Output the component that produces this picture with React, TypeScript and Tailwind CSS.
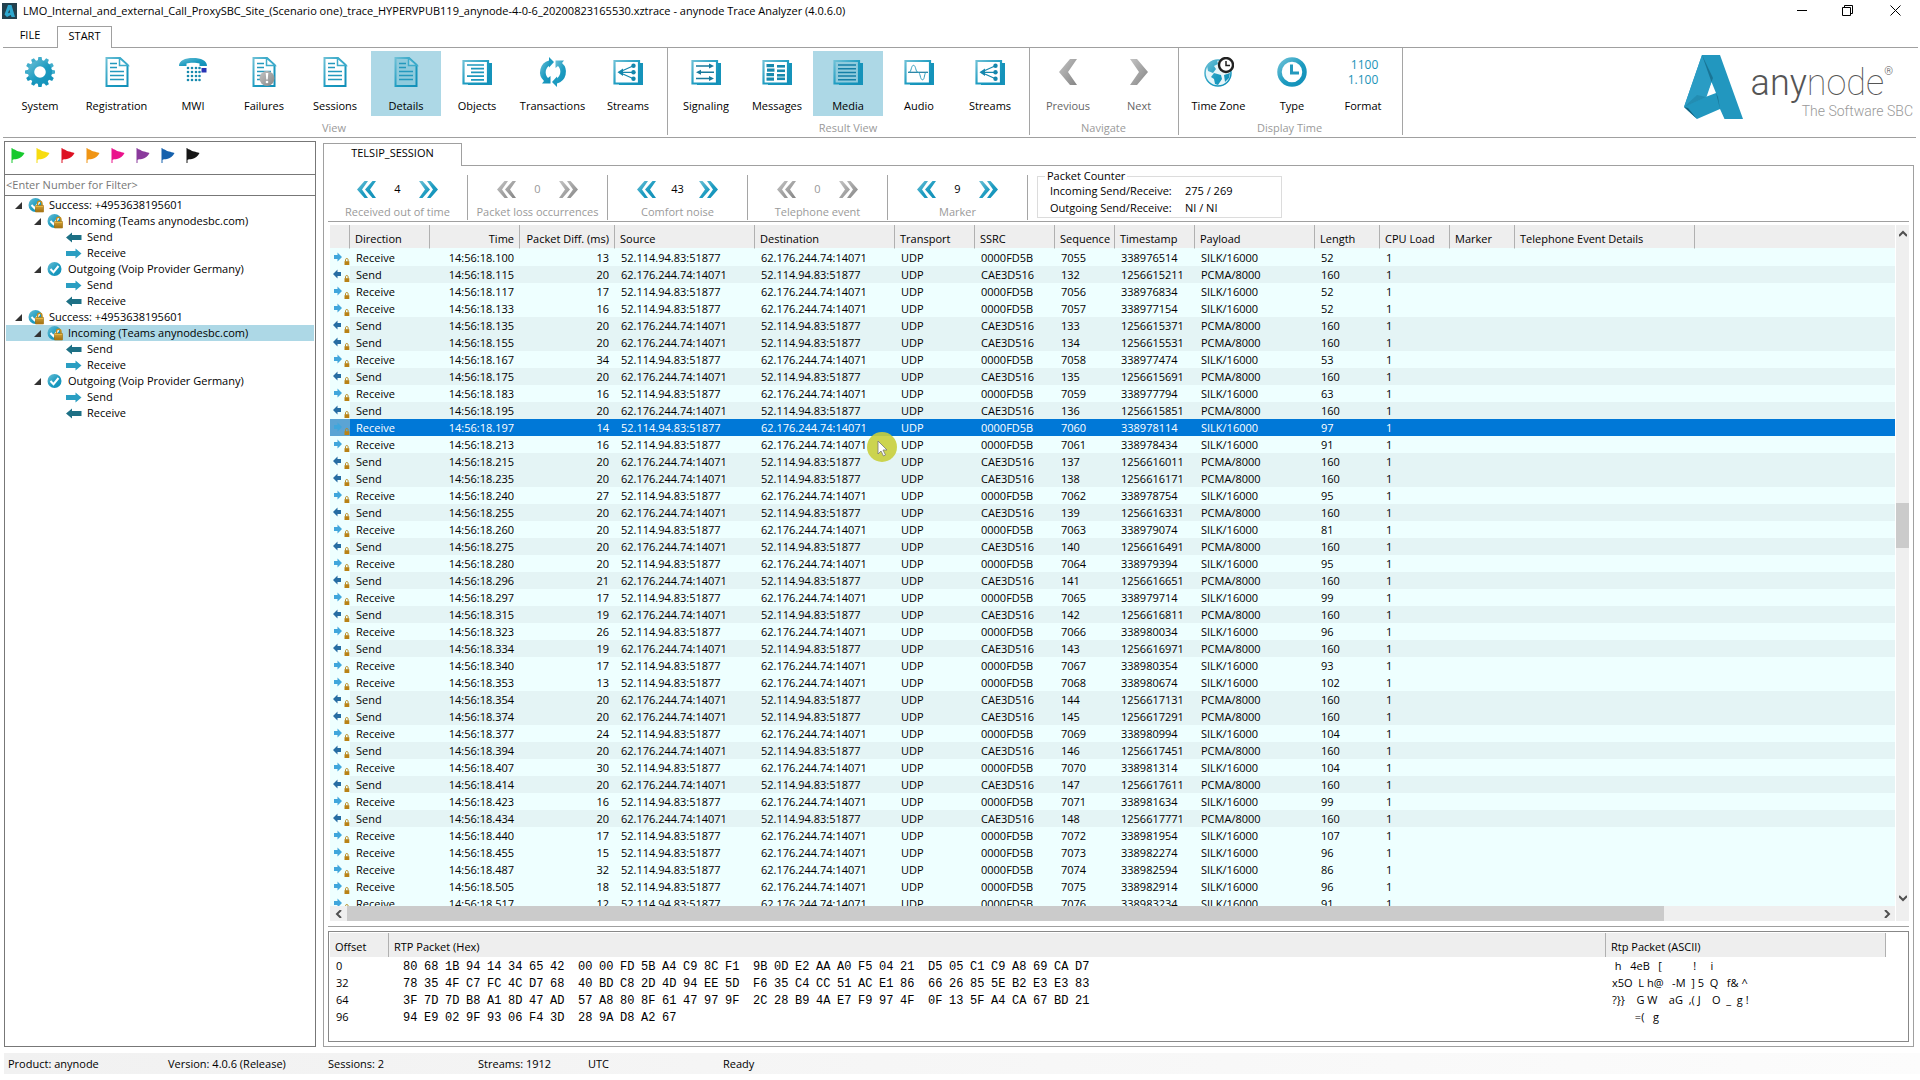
import clsx from "clsx";
import type { ReactNode } from "react";

type Direction = "Receive" | "Send";

interface Packet {
	direction: Direction;
	time: string;
	diff: number;
	length: number;
	sequence: number;
	timestamp: number;
}

const REMOTE = "52.114.94.83:51877";
const LOCAL = "62.176.244.74:14071";
const SELECTED_SEQUENCE = 7060;

// direction, time, diff in ms, payload length
const capture: [string, string, number, number][] = [
	["R", "18.100", 13, 52],
	["S", "18.115", 20, 160],
	["R", "18.117", 17, 52],
	["R", "18.133", 16, 52],
	["S", "18.135", 20, 160],
	["S", "18.155", 20, 160],
	["R", "18.167", 34, 53],
	["S", "18.175", 20, 160],
	["R", "18.183", 16, 63],
	["S", "18.195", 20, 160],
	["R", "18.197", 14, 97],
	["R", "18.213", 16, 91],
	["S", "18.215", 20, 160],
	["S", "18.235", 20, 160],
	["R", "18.240", 27, 95],
	["S", "18.255", 20, 160],
	["R", "18.260", 20, 81],
	["S", "18.275", 20, 160],
	["R", "18.280", 20, 95],
	["S", "18.296", 21, 160],
	["R", "18.297", 17, 99],
	["S", "18.315", 19, 160],
	["R", "18.323", 26, 96],
	["S", "18.334", 19, 160],
	["R", "18.340", 17, 93],
	["R", "18.353", 13, 102],
	["S", "18.354", 20, 160],
	["S", "18.374", 20, 160],
	["R", "18.377", 24, 104],
	["S", "18.394", 20, 160],
	["R", "18.407", 30, 104],
	["S", "18.414", 20, 160],
	["R", "18.423", 16, 99],
	["S", "18.434", 20, 160],
	["R", "18.440", 17, 107],
	["R", "18.455", 15, 96],
	["R", "18.487", 32, 86],
	["R", "18.505", 18, 96],
	["R", "18.517", 12, 91],
];

// SILK advances 320 ticks per packet, PCMA 160
function buildPackets(): Packet[] {
	let received = 0;
	let sent = 0;
	return capture.map(([dir, time, diff, length]) => {
		const isReceive = dir === "R";
		const index = isReceive ? received++ : sent++;
		return {
			direction: isReceive ? "Receive" : "Send",
			time: `14:56:${time}`,
			diff,
			length,
			sequence: (isReceive ? 7055 : 132) + index,
			timestamp: isReceive ? 338976514 + index * 320 : 1256615211 + index * 160,
		};
	});
}

const packets = buildPackets();

const columns = [
	{ label: "", width: "w-[20px]" },
	{ label: "Direction", width: "w-[80px]" },
	{ label: "Time", width: "w-[90px]", right: true },
	{ label: "Packet Diff. (ms)", width: "w-[95px]", right: true },
	{ label: "Source", width: "w-[140px]" },
	{ label: "Destination", width: "w-[140px]" },
	{ label: "Transport", width: "w-[80px]" },
	{ label: "SSRC", width: "w-[80px]" },
	{ label: "Sequence", width: "w-[60px]" },
	{ label: "Timestamp", width: "w-[80px]" },
	{ label: "Payload", width: "w-[120px]" },
	{ label: "Length", width: "w-[65px]" },
	{ label: "CPU Load", width: "w-[70px]" },
	{ label: "Marker", width: "w-[65px]" },
	{ label: "Telephone Event Details", width: "w-[180px]" },
];

const hexRows = [
	{
		offset: "0",
		groups: ["80 68 1B 94 14 34 65 42", "00 00 FD 5B A4 C9 8C F1", "9B 0D E2 AA A0 F5 04 21", "D5 05 C1 C9 A8 69 CA D7"],
		ascii: " h   4eB   [           !     i",
	},
	{
		offset: "32",
		groups: ["78 35 4F C7 FC 4C D7 68", "40 BD C8 2D 4D 94 EE 5D", "F6 35 C4 CC 51 AC E1 86", "66 26 85 5E B2 E3 E3 83"],
		ascii: "x5O  L h@   -M  ] 5  Q   f& ^",
	},
	{
		offset: "64",
		groups: ["3F 7D 7D B8 A1 8D 47 AD", "57 A8 80 8F 61 47 97 9F", "2C 28 B9 4A E7 F9 97 4F", "0F 13 5F A4 CA 67 BD 21"],
		ascii: "?}}    G W    aG  ,( J    O  _  g !",
	},
	{
		offset: "96",
		groups: ["94 E9 02 9F 93 06 F4 3D", "28 9A D8 A2 67"],
		ascii: "        =(   g",
	},
];

/* ---------- icons ---------- */

function Gradients() {
	return (
		<svg className="absolute size-0" aria-hidden="true">
			<defs>
				<linearGradient id="teal" x1="0" y1="0" x2="1" y2="1">
					<stop offset="0" stopColor="#6cc0d6" />
					<stop offset="0.55" stopColor="#1c9bc0" />
					<stop offset="1" stopColor="#128fb8" />
				</linearGradient>
				<linearGradient id="grey" x1="0" y1="0" x2="1" y2="1">
					<stop offset="0" stopColor="#c4c4c4" />
					<stop offset="1" stopColor="#858585" />
				</linearGradient>
				<linearGradient id="gold" x1="0" y1="0" x2="0" y2="1">
					<stop offset="0" stopColor="#f0c14c" />
					<stop offset="1" stopColor="#a87512" />
				</linearGradient>
			</defs>
		</svg>
	);
}

function Icon({ children }: { children: ReactNode }) {
	return (
		<svg className="h-[30px] w-[30px]" viewBox="0 0 30 30" fill="none" aria-hidden="true">
			{children}
		</svg>
	);
}

function GearIcon() {
	return (
		<Icon>
			{Array.from({ length: 12 }, (_, i) => (
				<path key={i} d="M12.6 4.5 13.4 0h3.2l.8 4.5z" fill={i > 3 && i < 9 ? "#1593ba" : "#3faccb"} transform={`rotate(${i * 30} 15 15)`} />
			))}
			<path fillRule="evenodd" d="M15 3a12 12 0 1 0 0 24 12 12 0 0 0 0-24zm0 6.200a5.800 5.800 0 1 1 0 11.600 5.800 5.800 0 0 1 0-11.600z" fill="url(#teal)" />
		</Icon>
	);
}

function DocumentIcon({ failed, active }: { failed?: boolean; active?: boolean }) {
	return (
		<Icon>
			<path d="M4.500 1h13.500l7.500 7v21h-21z" fill={active ? "#8fcbdd" : "#fff"} stroke="url(#teal)" strokeWidth="2" />
			<path d="M17.500 1v7.500H26z" fill={active ? "#add8e6" : "#fff"} stroke="#3faccb" strokeWidth="1.500" />
			<path d="M8 6.500h7M8 10.500h7M8 14.500h14M8 18.500h14M8 22.500h14" stroke="#2499bd" strokeWidth="1.300" />
			{failed && (
				<g>
					<circle cx="18" cy="21.500" r="7.500" fill="url(#grey)" />
					<path d="M16.700 16h2.600l-.6 6.500h-1.400z" fill="#fff" />
					<circle cx="18" cy="25" r="1.300" fill="#fff" />
				</g>
			)}
		</Icon>
	);
}

function PhoneIcon() {
	return (
		<Icon>
			<path d="M1 9C1 3.500 7 1 15 1s14 2.500 14 8h-7.500V6.500C19 5.600 11 5.600 8.500 6.500V9z" fill="url(#teal)" />
			{[11, 15, 19, 23].map((y) =>
				[10, 14, 18, 21.500].map((x) => <circle key={`${x}-${y}`} cx={x} cy={y} r="1.300" fill="#1789ad" />)
			)}
			<path d="M23.500 11h5v4.500h-5z" fill="#2733b5" />
		</Icon>
	);
}

function PanelIcon({ children, active }: { children: ReactNode; active?: boolean }) {
	return (
		<Icon>
			<path d="M27 6h3v22H6v-1.500h21z" fill="#1593ba" />
			<path d="M1.500 4h24.500v22.500H1.500z" fill={active ? "#8fcbdd" : "#fff"} stroke="url(#teal)" strokeWidth="2.200" />
			{children}
		</Icon>
	);
}

function ObjectsIcon() {
	return (
		<PanelIcon>
			<path d="M5 8h17M9 11.700h13M9 15.400h13M5 19.100h17M9 22.800h13" stroke="#1d98bd" strokeWidth="1.700" />
		</PanelIcon>
	);
}

function StreamsIcon() {
	return (
		<PanelIcon>
			<path d="M6 15.300 21 8.500M6 15.300h15M6 15.300 21 22" stroke="#1487ad" strokeWidth="1.200" />
			<path d="M4.500 15.300 10 11.500v7.600z" fill="#1487ad" />
			<circle cx="20.500" cy="8.800" r="2.200" fill="#1487ad" />
			<circle cx="20.500" cy="15.300" r="2.200" fill="#1487ad" />
			<circle cx="20.500" cy="21.800" r="2.200" fill="#1487ad" />
		</PanelIcon>
	);
}

function TransactionsIcon() {
	return (
		<Icon>
			<path d="M11 3.500A12 12 0 0 0 6 24l-2 2.500h8.500V19L10 21a8 8 0 0 1 2.500-13z" fill="url(#teal)" />
			<path d="M19 26.500A12 12 0 0 0 24 6l2-2.500h-8.500V11L20 9a8 8 0 0 1-2.500 13z" fill="url(#teal)" />
			<path d="m11 0 5 5-5 5.500zM19 30l-5-5 5-5.500z" fill="#1c9bc0" />
		</Icon>
	);
}

function SignalingIcon() {
	return (
		<PanelIcon>
			<path d="M5 9h13M10 15.300h13M5 21.500h13" stroke="#17799c" strokeWidth="1.600" />
			<path d="M18 6.500 23 9l-5 2.500zM10 12.800 5 15.300l5 2.500zM18 19l5 2.500-5 2.500z" fill="#17799c" />
		</PanelIcon>
	);
}

function MessagesIcon() {
	return (
		<PanelIcon>
			{[7, 11.500, 16, 20.500].map((y, i) => (
				<g key={y} fill="#1789ad">
					<path d={`M${i === 1 ? 5 : 4.500} ${y}h7.500v3.200h-7.500z`} />
					<path d={`M15 ${i === 3 ? y : y + 1}h8v2.600h-8z`} />
				</g>
			))}
		</PanelIcon>
	);
}

function MediaIcon() {
	return (
		<PanelIcon active>
			<path d="M5 8h18M5 11.700h18M5 15.400h18M5 19.100h18M5 22.800h18" stroke="#147fa6" strokeWidth="1.500" />
		</PanelIcon>
	);
}

function AudioIcon() {
	return (
		<PanelIcon>
			<path d="M4 15.300h20" stroke="#17799c" strokeWidth="1.200" />
			<path d="M5 15.300c2.500 0 2-7 4.500-7s2 7 4.500 7 2 7.500 4.500 7.500 1.500-7.500 4-7.500" stroke="#2f9fc0" strokeWidth="1" />
		</PanelIcon>
	);
}

function ChevronIcon({ next }: { next?: boolean }) {
	return (
		<Icon>
			<path d={next ? "M6 2h7l11 13-11 13H6l9-13z" : "M24 2h-7L6 15l11 13h7l-9-13z"} fill="url(#grey)" />
		</Icon>
	);
}

function TimeZoneIcon() {
	return (
		<Icon>
			<circle cx="14" cy="16" r="13" fill="#e8f6fa" stroke="url(#teal)" strokeWidth="1.500" />
			<path d="M3 9C6 4 10 3 13 3l1 4-4 2 2 3-3 4-5-2zM10 16l7 2 1 4-4 6-3-1-1-5-3-2zM20 18l6-2-1 5-4 4z" fill="url(#teal)" />
			<circle cx="22" cy="8" r="7" fill="#fff" stroke="#222" strokeWidth="2.400" />
			<path d="M22 4v4.500h4" stroke="#222" strokeWidth="1.500" />
		</Icon>
	);
}

function ClockIcon() {
	return (
		<Icon>
			<circle cx="15" cy="15" r="12.500" fill="#fff" stroke="url(#teal)" strokeWidth="4.500" />
			<path d="M14.500 7.500V16H22" stroke="#2499bd" strokeWidth="3" />
		</Icon>
	);
}

function LockShape() {
	return (
		<g>
			<path d="M9.500 9V6.500a2.200 2.200 0 0 1 4.400 0V9" stroke="#c58d1c" strokeWidth="1.500" fill="none" />
			<path d="M7.500 8.500h8V15h-8z" fill="url(#gold)" stroke="#a3700f" strokeWidth="0.600" />
			<path d="M7.500 11h8M7.500 13h8" stroke="#8d5f0b" strokeWidth="0.600" />
		</g>
	);
}

function SuccessIcon({ locked }: { locked?: boolean }) {
	return (
		<svg className="h-[16px] w-[16px] shrink-0" viewBox="0 0 16 16" fill="none" aria-hidden="true">
			<circle cx="7.500" cy="8" r="7" fill="url(#teal)" />
			<path d="m3.500 8 3 3.200 5-6.200" stroke="#fff" strokeWidth="2" />
			{locked && <LockShape />}
		</svg>
	);
}

function TreeArrow({ left }: { left?: boolean }) {
	return (
		<svg className="h-[16px] w-[16px] shrink-0" viewBox="0 0 16 16" aria-hidden="true">
			{left ? (
				<path d="m0 8.500 6-5v2.500h9.500v5H6v2.500z" fill="#1d7085" />
			) : (
				<path d="m15.500 8.500-6-5v2.500H0v5h9.500v2.500z" fill="#2a9ec2" />
			)}
		</svg>
	);
}

function PacketIcon({ direction }: { direction: Direction }) {
	return (
		<svg className="ml-[3px] block h-[17px] w-[17px]" viewBox="0 0 17 17" aria-hidden="true">
			{direction === "Receive" ? (
				<path d="m9 8-4.500-4.500V6H1v4h3.500v2.500z" fill="#3fa6dc" />
			) : (
				<path d="m0 8 4.500-4.500V6H8v4H4.500v2.500z" fill="#256da3" />
			)}
			<path d="M12.500 12.500v-1.800c0-1.600 2.600-1.600 2.600 0v1.800" stroke="#b98a22" fill="none" />
			<path d="M11.500 12.200h4.800V16h-4.800z" fill="#b98216" />
		</svg>
	);
}

function DoubleChevron({ next, disabled }: { next?: boolean; disabled?: boolean }) {
	return (
		<svg className="h-[17px] w-[19px]" viewBox="0 0 19 17" aria-hidden="true">
			<path
				d={next ? "M0 0h3.500L11 8.500 3.500 17H0l6-8.500zM8 0h3.500L19 8.500 11.500 17H8l6-8.500z" : "M19 0h-3.500L8 8.500l7.500 8.500H19l-6-8.500zM11 0H7.500L0 8.500 7.500 17H11L5 8.500z"}
				fill={disabled ? "url(#grey)" : "url(#teal)"}
			/>
		</svg>
	);
}

function AppIcon() {
	return (
		<svg className="h-[16px] w-[15px]" viewBox="0 0 15 16" aria-hidden="true">
			<path d="M0 0h15v16H0z" fill="#23404d" />
			<path d="M6 2h3.500L13 14H9.500L8.800 12 5 14 2.500 11.500zM7.300 6.500 6 10.200l2.200-.8z" fillRule="evenodd" fill="#2ea8cf" />
		</svg>
	);
}

function Brand() {
	return (
		<div className="ml-auto mr-[3px] flex items-start pt-[7px]">
			<svg className="h-[64px] w-[59px]" viewBox="0 0 59 64" aria-hidden="true">
				<path d="M18 0h18l23 64H40.500L36 54 13 64 0 52z" fill="#2297bf" />
				<path d="m27.500 27 4.500 11-10.500 4z" fill="#fff" />
				<path d="m18 0 9.500 27-5 15L0 52z" fill="#2a9cc4" />
				<path d="M0 52 22 42l-9-2z" fill="#1b7da0" opacity="0.500" />
				<path d="m0 52 13 12-9-11z" fill="#12617f" />
				<path d="m18 0 9.500 27 1.500-4z" fill="#145d7a" opacity="0.600" />
				<path d="m32 38 4 16-2-12z" fill="#145d7a" opacity="0.600" />
			</svg>
			<div className="flex flex-col items-end pl-[8px] font-[Roboto]">
				<div className="flex pt-[5px] pr-[20px] text-[#555]">
					<span className="text-[36px] leading-[46px] font-light">any</span>
					<span className="text-[36px] leading-[46px] font-thin">node</span>
					<span className="pt-[5px] text-[11px] leading-[14px] font-light">®</span>
				</div>
				<span className="-mt-[3px] text-[14px] leading-[16px] font-light text-[#999]">The Software SBC</span>
			</div>
		</div>
	);
}

/* ---------- ribbon ---------- */

interface RibbonButtonProps {
	label: string;
	icon: ReactNode;
	active?: boolean;
	disabled?: boolean;
	width?: string;
}

function RibbonButton({ label, icon, active, disabled, width = "w-[70px]" }: RibbonButtonProps) {
	return (
		<button
			type="button"
			disabled={disabled}
			className={clsx("flex h-[65px] flex-col items-center pt-[6px]", width, active && "bg-[#add8e6]", disabled ? "text-[#666]" : "text-black")}>
			{icon}
			<span className="mt-[11px] text-[11px] leading-[16px]">{label}</span>
		</button>
	);
}

function RibbonGroup({ title, children, className }: { title: string; children: ReactNode; className?: string }) {
	return (
		<section className={clsx("flex h-[87px] flex-col border-r border-[#a5a5a5] pt-[3px]", className)}>
			<div className="flex gap-px">{children}</div>
			<h2 className="mt-[4px] text-center text-[11px] leading-[16px] text-[#9a9a9a]">{title}</h2>
		</section>
	);
}

function Ribbon() {
	return (
		<div className="ml-[3px] mr-[4px] flex h-[90px] border-b border-[#a0a0a0]">
			<RibbonGroup title="View" className="pl-[2px] pr-[4px]">
				<RibbonButton label="System" icon={<GearIcon />} />
				<RibbonButton label="Registration" icon={<DocumentIcon />} width="w-[81px]" />
				<RibbonButton label="MWI" icon={<PhoneIcon />} />
				<RibbonButton label="Failures" icon={<DocumentIcon failed />} />
				<RibbonButton label="Sessions" icon={<DocumentIcon />} />
				<RibbonButton label="Details" icon={<DocumentIcon active />} active />
				<RibbonButton label="Objects" icon={<ObjectsIcon />} />
				<RibbonButton label="Transactions" icon={<TransactionsIcon />} width="w-[79px]" />
				<RibbonButton label="Streams" icon={<StreamsIcon />} />
			</RibbonGroup>
			<RibbonGroup title="Result View" className="pl-[3px] pr-[4px]">
				<RibbonButton label="Signaling" icon={<SignalingIcon />} />
				<RibbonButton label="Messages" icon={<MessagesIcon />} />
				<RibbonButton label="Media" icon={<MediaIcon />} active />
				<RibbonButton label="Audio" icon={<AudioIcon />} />
				<RibbonButton label="Streams" icon={<StreamsIcon />} />
			</RibbonGroup>
			<RibbonGroup title="Navigate" className="pl-[3px] pr-[4px]">
				<RibbonButton label="Previous" icon={<ChevronIcon />} disabled />
				<RibbonButton label="Next" icon={<ChevronIcon next />} disabled />
			</RibbonGroup>
			<RibbonGroup title="Display Time" className="pl-[2px] pr-[4px]">
				<RibbonButton label="Time Zone" icon={<TimeZoneIcon />} width="w-[75px]" />
				<RibbonButton label="Type" icon={<ClockIcon />} />
				<RibbonButton
					label="Format"
					icon={
						<span className="flex h-[30px] flex-col justify-center text-right text-[12px] leading-[15px] font-medium text-[#1b93b8]">
							<span>1100</span>
							<span>1.100</span>
						</span>
					}
				/>
			</RibbonGroup>
			<Brand />
		</div>
	);
}

/* ---------- session tree ---------- */

const flags = [
	["Green", "#17c92e"],
	["Yellow", "#f7dc10"],
	["Red", "#dd1122"],
	["Orange", "#f09515"],
	["Pink", "#ea128c"],
	["Purple", "#8a3a9c"],
	["Blue", "#1561ad"],
	["Black", "#161616"],
];

interface TreeRowProps {
	label: string;
	level: number;
	icon: ReactNode;
	selected?: boolean;
}

const indents = ["pl-[9px]", "pl-[28px]", "pl-[48px]"];

function TreeRow({ label, level, icon, selected }: TreeRowProps) {
	return (
		<li className={clsx("mx-px flex h-[16px] items-center leading-[16px]", indents[level], selected && "bg-[#add8e6]")}>
			{level < 2 && (
				<svg className="mr-[6px] h-[7px] w-[7px] shrink-0" viewBox="0 0 7 7" aria-hidden="true">
					<path d="M7 0v7H0z" fill="#333" />
				</svg>
			)}
			{level === 2 && <span className="w-[12px]" />}
			{icon}
			<span className="pl-[5px] text-[11px] whitespace-nowrap">{label}</span>
		</li>
	);
}

function SessionBranch({ selected }: { selected?: boolean }) {
	return (
		<>
			<TreeRow level={0} label="Success: +4953638195601" icon={<SuccessIcon locked />} />
			<TreeRow level={1} label="Incoming (Teams anynodesbc.com)" icon={<SuccessIcon locked />} selected={selected} />
			<TreeRow level={2} label="Send" icon={<TreeArrow left />} />
			<TreeRow level={2} label="Receive" icon={<TreeArrow />} />
			<TreeRow level={1} label="Outgoing (Voip Provider Germany)" icon={<SuccessIcon />} />
			<TreeRow level={2} label="Send" icon={<TreeArrow />} />
			<TreeRow level={2} label="Receive" icon={<TreeArrow left />} />
		</>
	);
}

function SessionPanel() {
	return (
		<aside className="flex w-[312px] shrink-0 flex-col border border-[#777]">
			<div className="flex h-[32px] gap-[11px] pt-[6px] pl-[6px]">
				{flags.map(([name, color]) => (
					<button key={name} type="button" aria-label={`${name} flag`} className="h-[16px] w-[14px]">
						<svg viewBox="0 0 14 16" className="h-[16px] w-[14px]" aria-hidden="true">
							<path d="M1 0v15" stroke={color} strokeWidth="1" />
							<path d="M1 1c3 0 4 2 7 2.500 2 .4 3 1 5.500 1.500C12 8 9 10.500 6 11c-2 .3-3.500.2-5 1z" fill={color} />
						</svg>
					</button>
				))}
			</div>
			<input
				type="text"
				aria-label="Filter by number"
				placeholder="<Enter Number for Filter>"
				className="h-[22px] w-full border-y border-[#777] px-px pb-[2px] text-[11px] placeholder:text-[#777] outline-none"
			/>
			<ul className="pt-px">
				<SessionBranch />
				<SessionBranch selected />
			</ul>
		</aside>
	);
}

/* ---------- media view ---------- */

function Counter({ label, count, disabled, last }: { label: string; count: number; disabled?: boolean; last?: boolean }) {
	return (
		<div className={clsx("flex h-[45px] w-[140px] flex-col items-center border-r border-[#a5a5a5] pt-[5px]", last && "mr-[9px]")}>
			<div className="flex h-[18px] items-center">
				<button type="button" disabled={disabled} aria-label={`Previous ${label}`}>
					<DoubleChevron disabled={disabled} />
				</button>
				<span className={clsx("w-[43px] text-center text-[11px] leading-[16px]", disabled && "text-[#999]")}>{count}</span>
				<button type="button" disabled={disabled} aria-label={`Next ${label}`}>
					<DoubleChevron next disabled={disabled} />
				</button>
			</div>
			<span className="mt-[6px] text-[11px] leading-[16px] text-[#9a9a9a]">{label}</span>
		</div>
	);
}

function PacketCounter() {
	return (
		<fieldset className="-mt-[7px] h-[50px] w-[245px] border border-[#dcdcdc] px-[12px] text-[11px]">
			<legend className="-ml-[5px] px-[2px] leading-[16px]">Packet Counter</legend>
			<dl className="-mt-[2px] grid grid-cols-[135px_1fr] leading-[17px]">
				<dt>Incoming Send/Receive:</dt>
				<dd>275 / 269</dd>
				<dt>Outgoing Send/Receive:</dt>
				<dd>NI / NI</dd>
			</dl>
		</fieldset>
	);
}

function PacketRow({ packet }: { packet: Packet }) {
	const isReceive = packet.direction === "Receive";
	const selected = packet.sequence === SELECTED_SEQUENCE;
	const cells = [
		isReceive ? REMOTE : LOCAL,
		isReceive ? LOCAL : REMOTE,
		"UDP",
		isReceive ? "0000FD5B" : "CAE3D516",
		packet.sequence,
		packet.timestamp,
		isReceive ? "SILK/16000" : "PCMA/8000",
		packet.length,
		"1",
		"",
		"",
		"",
	];
	return (
		<tr className={clsx("h-[17px]", selected ? "bg-[#0078d7] text-white" : isReceive ? "bg-[#eeffff]" : "bg-[#e4f4f5]")}>
			<td className={selected ? "bg-[#5ba4d4] p-0" : "bg-[#eeffff] p-0"}>
				<PacketIcon direction={packet.direction} />
			</td>
			<td className="py-0 pl-[6px]">{packet.direction}</td>
			<td className="py-0 pr-[6px] text-right">{packet.time}</td>
			<td className="py-0 pr-[6px] text-right">{packet.diff}</td>
			{cells.map((cell, i) => (
				<td key={i} className="py-0 pl-[6px]">
					{cell}
				</td>
			))}
		</tr>
	);
}

function ScrollArrow({ path, label, className }: { path: string; label: string; className: string }) {
	return (
		<button type="button" aria-label={label} className={clsx("flex shrink-0 items-center justify-center", className)}>
			<svg className="h-[8px] w-[8px]" viewBox="0 0 8 8" fill="none" aria-hidden="true">
				<path d={path} stroke="#505050" strokeWidth="2" />
			</svg>
		</button>
	);
}

function PacketTable() {
	return (
		<div className="relative mt-[3px] ml-[6px] mr-[4px] flex min-h-0 flex-1">
			<div className="flex min-w-0 flex-1 flex-col">
				<div className="min-h-0 flex-1 overflow-hidden bg-[#eeffff]">
					<table className="w-full table-fixed border-separate border-spacing-0 text-[11px] leading-[17px] whitespace-nowrap">
						<thead>
							<tr className="h-[24px] bg-[#eee]">
								{columns.map((column, i) => (
									<th
										key={i}
										scope="col"
										className={clsx(
											"border-r border-b border-r-[#b0b0b0] border-b-[#eeffff] pt-[3px] pb-0 font-normal",
											column.width,
											column.right ? "pr-[5px] text-right" : "pl-[5px] text-left"
										)}>
										{column.label}
									</th>
								))}
								<th className="border-b border-b-[#eeffff] p-0" />
							</tr>
						</thead>
						<tbody>
							{packets.map((packet) => (
								<PacketRow key={packet.time} packet={packet} />
							))}
						</tbody>
					</table>
				</div>
				<div className="flex h-[15px] shrink-0 bg-[#efefef]">
					<ScrollArrow label="Scroll left" path="M6 0 2 4l4 4" className="w-[17px]" />
					<div className="flex flex-1">
						<div className="w-[86%] bg-[#cbcbcb]" />
					</div>
					<ScrollArrow label="Scroll right" path="m2 0 4 4-4 4" className="w-[17px]" />
				</div>
			</div>
			<div className="ml-px flex w-[13px] flex-col bg-[#efefef]">
				<ScrollArrow label="Scroll up" path="m0 6 4-4 4 4" className="h-[17px]" />
				<div className="flex-[261]" />
				<div className="h-[45px] bg-[#cbcbcb]" />
				<div className="flex-[341]" />
				<ScrollArrow label="Scroll down" path="m0 2 4 4 4-4" className="h-[17px]" />
				<div className="h-[15px]" />
			</div>
			{/* pointer with its click highlight */}
			<svg className="absolute top-[205px] left-[535px] h-[34px] w-[34px]" viewBox="0 0 34 34" aria-hidden="true">
				<circle cx="17" cy="17" r="15" fill="#c8cf3c" opacity="0.900" />
				<path d="M13 11v13l3-3 2.500 5 2-1-2.500-5h4z" fill="#fff" stroke="#777" strokeWidth="0.800" />
			</svg>
		</div>
	);
}

function HexBytes({ groups }: { groups: string[] }) {
	return (
		<div className="flex gap-[7px] pt-[4px] font-['Liberation_Mono',monospace] text-[12px] leading-[13px]">
			{groups.map((group) => (
				<div key={group} className="flex">
					{group.split(" ").map((byte, i) => (
						<span key={i} className="w-[21px]">
							{byte}
						</span>
					))}
				</div>
			))}
		</div>
	);
}

function HexView() {
	return (
		<div className="mr-[4px] ml-[4px] mt-[4px] mb-[4px] h-[111px] border border-[#888] p-px pr-[2px]">
			<table className="w-full table-fixed border-separate border-spacing-0 text-[11px] leading-[17px]">
				<thead>
					<tr className="h-[24px] text-left">
						<th scope="col" className="w-[59px] border-r border-[#b0b0b0] bg-[#eee] pt-[2px] pb-0 pl-[5px] font-normal">
							Offset
						</th>
						<th scope="col" className="border-r border-[#b0b0b0] bg-[#eee] pt-[2px] pb-0 pl-[5px] font-normal">
							RTP Packet (Hex)
						</th>
						<th scope="col" className="w-[280px] border-r border-[#b0b0b0] bg-[#eee] pt-[2px] pb-0 pl-[5px] font-normal">
							Rtp Packet (ASCII)
						</th>
						<th className="w-[20px]" />
					</tr>
				</thead>
				<tbody>
					{hexRows.map((row) => (
						<tr key={row.offset} className="h-[17px]">
							<td className="py-0 pl-[6px]">{row.offset}</td>
							<td className="py-0 pl-[14px]">
								<HexBytes groups={row.groups} />
							</td>
							<td className="py-0 pl-[6px] whitespace-pre">{row.ascii}</td>
							<td className="p-0" />
						</tr>
					))}
				</tbody>
			</table>
		</div>
	);
}

function MediaPanel() {
	return (
		<main className="mt-[2px] flex min-w-0 flex-1 flex-col">
			<div className="flex h-[23px] shrink-0">
				<button type="button" className="w-[139px] border-x border-t border-[#a0a0a0] pb-[4px] text-[11px]">
					TELSIP_SESSION
				</button>
				<div className="flex-1 border-b border-[#a0a0a0]" />
			</div>
			<div className="flex min-h-0 flex-1 flex-col border-x border-b border-[#a0a0a0]">
				<div className="mr-[4px] ml-[4px] flex h-[56px] shrink-0 border-b border-[#a0a0a0] pt-[9px]">
					<Counter label="Received out of time" count={4} />
					<Counter label="Packet loss occurrences" count={0} disabled />
					<Counter label="Comfort noise" count={43} />
					<Counter label="Telephone event" count={0} disabled />
					<Counter label="Marker" count={9} last />
					<PacketCounter />
				</div>
				<PacketTable />
				<div className="mx-[4px] mt-[5px] border-t border-[#a0a0a0]" />
				<HexView />
			</div>
		</main>
	);
}

/* ---------- window ---------- */

function TitleBar() {
	return (
		<header className="flex h-[26px] shrink-0 items-start justify-between bg-white">
			<div className="flex items-center gap-[6px] pt-[3px] pl-[2px]">
				<AppIcon />
				<h1 className="text-[11px] leading-[16px]">
					LMO_Internal_and_external_Call_ProxySBC_Site_(Scenario one)_trace_HYPERVPUB119_anynode-4-0-6_20200823165530.xztrace - anynode Trace Analyzer (4.0.6.0)
				</h1>
			</div>
			<div className="flex text-black">
				<button type="button" aria-label="Minimize" className="flex h-[20px] w-[46px] items-center justify-center">
					<svg className="size-[11px]" viewBox="0 0 11 11"><path d="M0 5.500h10" stroke="currentColor" /></svg>
				</button>
				<button type="button" aria-label="Restore" className="flex h-[20px] w-[45px] items-center justify-center">
					<svg className="size-[11px]" viewBox="0 0 11 11" fill="none">
						<path d="M.5 2.500h8v8h-8zM2.500 2.500v-2h8v8h-2" stroke="currentColor" />
					</svg>
				</button>
				<button type="button" aria-label="Close" className="flex h-[20px] w-[50px] items-center justify-center">
					<svg className="size-[11px]" viewBox="0 0 11 11"><path d="m.5.5 10 10M10.500.5l-10 10" stroke="currentColor" /></svg>
				</button>
			</div>
		</header>
	);
}

function MenuTabs() {
	return (
		<nav className="mr-[2px] ml-[3px] flex h-[22px] shrink-0 text-[11px]">
			<button type="button" className="w-[54px] border-b border-[#a0a0a0] pb-[2px]">
				FILE
			</button>
			<button type="button" className="w-[55px] border-x border-t border-[#a0a0a0] pb-[3px]">
				START
			</button>
			<div className="flex-1 border-b border-[#a0a0a0]" />
		</nav>
	);
}

function StatusBar() {
	return (
		<footer className="mb-[6px] ml-[4px] flex h-[21px] shrink-0 items-center bg-linear-to-r from-[#f1f1f1] to-[#fcfcfc] pl-[4px] text-[11px] leading-[16px]">
			<span className="w-[160px]">Product: anynode</span>
			<span className="w-[160px]">Version: 4.0.6 (Release)</span>
			<span className="w-[150px]">Sessions: 2</span>
			<span className="w-[110px]">Streams: 1912</span>
			<span className="w-[135px]">UTC</span>
			<span>Ready</span>
		</footer>
	);
}

export default function App() {
	return (
		<div className="flex h-screen flex-col overflow-hidden bg-white font-['Open_Sans','Noto_Sans',sans-serif] text-black">
			<Gradients />
			<TitleBar />
			<MenuTabs />
			<Ribbon />
			<div className="mt-[3px] mr-[6px] mb-[6px] ml-[4px] flex min-h-0 flex-1 gap-[7px]">
				<SessionPanel />
				<MediaPanel />
			</div>
			<StatusBar />
		</div>
	);
}
